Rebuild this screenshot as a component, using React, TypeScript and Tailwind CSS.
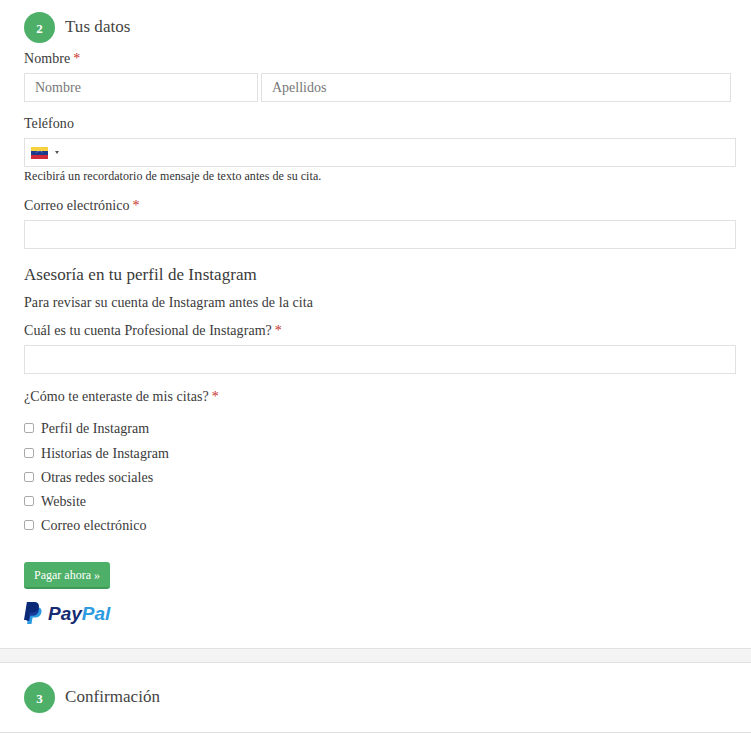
const serif = { fontFamily: '"Liberation Serif", serif' };

function Req() {
  return <span className="text-[#c9302c] ml-[3px]">*</span>;
}

function Label({ children, className = "" }: { children: React.ReactNode; className?: string }) {
  return <div className={`h-5 leading-5 text-[14px] tracking-[0.05px] text-[#3a3a3a] ${className}`}>{children}</div>;
}

function Box({ children, className = "" }: { children?: React.ReactNode; className?: string }) {
  return (
    <div className={`h-[29px] border border-[#e1e1e1] bg-white flex items-center px-[10px] text-[14px] text-[#777] ${className}`}>
      {children}
    </div>
  );
}

function Flag() {
  return (
    <svg width="17" height="12" viewBox="0 0 17 12" className="block">
      <rect width="17" height="4" fill="#f7d240" />
      <rect y="4" width="17" height="4" fill="#1d3a8f" />
      <rect y="8" width="17" height="4" fill="#cf2b36" />
      <path d="M5.5 5.6a3.5 3.5 0 0 1 6 0" fill="none" stroke="#aeb9da" strokeWidth=".7" strokeDasharray="1 .6" />
    </svg>
  );
}

function PayPalMark() {
  return (
    <svg width="18" height="22" viewBox="0 0 18 22" className="block">
      <path d="M5 5h7.5c3.6 0 5.6 2 5 5.2-.6 3.4-3.2 5.3-6.4 5.3H8.6L7.5 22H3.1z" fill="#2d9be0" />
      <path d="M4.4 3.5h6.5c3.2 0 4.6 2 4 5-.6 3.3-3 5.3-6.3 5.3H6.3L5.2 19H2.6z" fill="#1a3a9c" />
      <path d="M2.9 0h7c3.5 0 5.5 1.8 5 4.8-.6 3.7-3.2 5.7-6.7 5.7H5.8L4.6 18H0z" fill="#0a2a78" />
    </svg>
  );
}

function Step({ n, title, className = "" }: { n: number; title: string; className?: string }) {
  return (
    <div className={`flex items-center ${className}`}>
      <div className="w-[31px] h-[31px] rounded-full bg-[#4eb068] text-white flex items-center justify-center text-[13px] font-bold pt-[3px]">
        {n}
      </div>
      <div className="ml-[10px] pb-[2px] text-[17px] tracking-[0.05px] text-[#444]">{title}</div>
    </div>
  );
}

export default function App() {
  const options = ["Perfil de Instagram", "Historias de Instagram", "Otras redes sociales", "Website", "Correo electrónico"];
  return (
    <div className="w-[751px] h-[734px] bg-white overflow-hidden" style={serif}>
      <div className="pl-6 pr-[15px] pt-3">
        <Step n={2} title="Tus datos" />
        <Label className="mt-[6px]">Nombre<Req /></Label>
        <div className="flex mt-[4px] gap-[3px]">
          <Box className="w-[234px]">Nombre</Box>
          <Box className="w-[470px]">Apellidos</Box>
        </div>
        <Label className="mt-[12px]">Teléfono</Label>
        <Box className="mt-[4px] !px-[6px]">
          <Flag />
          <span className="ml-[7px] w-0 h-0 border-x-[2px] border-x-transparent border-t-[3px] border-t-[#555]" />
        </Box>
        <div className="mt-[1px] h-4 leading-4 text-[12px] tracking-[0.05px] text-[#333]">Recibirá un recordatorio de mensaje de texto antes de su cita.</div>
        <Label className="mt-[12px]">Correo electrónico<Req /></Label>
        <Box className="mt-[4px]" />
        <div className="mt-[14px] h-6 leading-6 text-[17px] tracking-[0.06px] text-[#3a3a3a]">Asesoría en tu perfil de Instagram</div>
        <Label className="mt-[6px] !tracking-[0.08px]">Para revisar su cuenta de Instagram antes de la cita</Label>
        <Label className="mt-2">Cuál es tu cuenta Profesional de Instagram?<Req /></Label>
        <Box className="mt-[4px]" />
        <Label className="mt-[13px]">¿Cómo te enteraste de mis citas?<Req /></Label>
        <div className="mt-[11px] flex flex-col">
          {options.map((o, i) => (
            <div key={o} className={`flex items-center h-5 text-[14px] tracking-[0.05px] text-[#3a3a3a] ${i === 0 ? "" : i === 1 ? "mt-[5px]" : "mt-[4px]"}`}>
              <span className="w-[10px] h-[10px] border border-[#aaa] rounded-[2px] bg-white mr-[7px]" />
              {o}
            </div>
          ))}
        </div>
        <div className="mt-[27px] w-[86px] h-[27px] rounded-[3px] bg-[#4eb068] border-b-2 border-b-[#3f9a58] text-white text-[12px] flex items-center justify-center">
          Pagar ahora »
        </div>
        <div className="mt-[13px] flex items-center h-[22px]">
          <PayPalMark />
          <span className="ml-[6px] text-[19px] font-bold italic leading-none" style={{ fontFamily: '"Liberation Sans", sans-serif' }}>
            <span className="text-[#152c73]">Pay</span>
            <span className="text-[#2d9be0]">Pal</span>
          </span>
        </div>
      </div>
      <div className="mt-[24px] h-[15px] bg-[#f4f4f4] border-y border-[#e1e1e1]" />
      <div className="h-[70px] pl-6 border-b border-[#e1e1e1] flex items-center">
        <Step n={3} title="Confirmación" />
      </div>
    </div>
  );
}
